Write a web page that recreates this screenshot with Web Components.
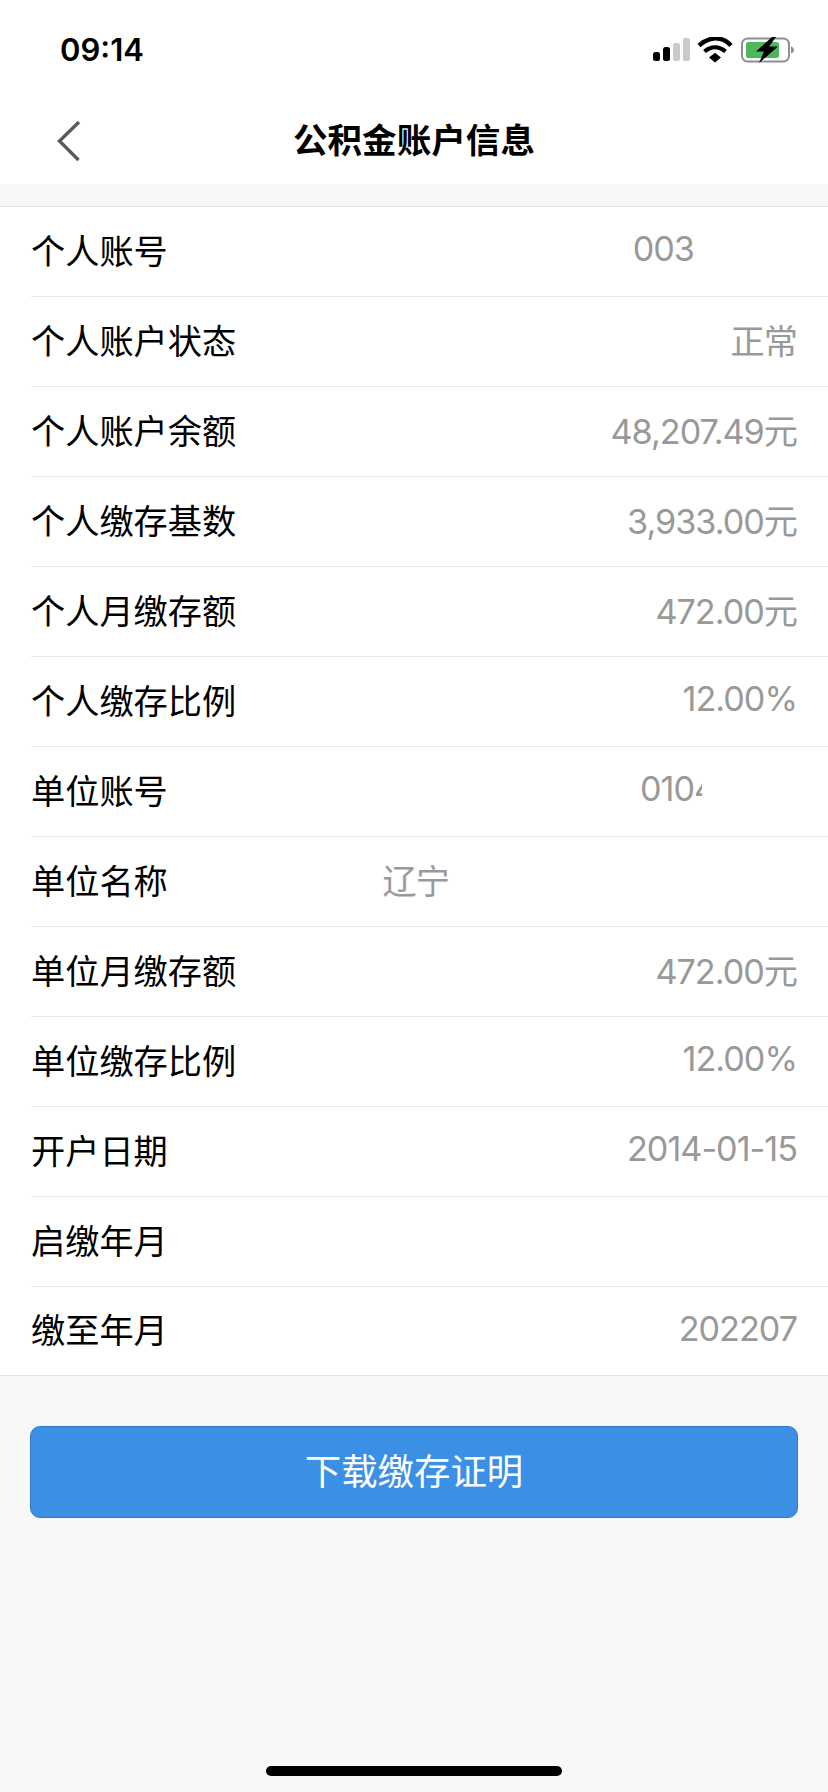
<!DOCTYPE html>
<html lang="zh">
<head>
<meta charset="utf-8">
<title>公积金账户信息</title>
<style>
  html, body { margin: 0; padding: 0; background: #f8f8f8; }
  body { width: 828px; height: 1792px; overflow: hidden; font-family: Inter, "Noto Sans CJK SC", sans-serif; }
</style>
</head>
<body>
<app-page>
  <status-bar time="09:14"></status-bar>
  <nav-bar>公积金账户信息</nav-bar>
  <info-list>
    <info-row label="个人账号" value="003" inset="103"></info-row>
    <info-row label="个人账户状态" value="正常"></info-row>
    <info-row label="个人账户余额" value="48,207.49元"></info-row>
    <info-row label="个人缴存基数" value="3,933.00元"></info-row>
    <info-row label="个人月缴存额" value="472.00元"></info-row>
    <info-row label="个人缴存比例" value="12.00%"></info-row>
    <info-row label="单位账号" value="0104" inset="95" clip="62"></info-row>
    <info-row label="单位名称" value="辽宁" inset="348"></info-row>
    <info-row label="单位月缴存额" value="472.00元"></info-row>
    <info-row label="单位缴存比例" value="12.00%"></info-row>
    <info-row label="开户日期" value="2014-01-15"></info-row>
    <info-row label="启缴年月" value=""></info-row>
    <info-row label="缴至年月" value="202207" last></info-row>
  </info-list>
  <action-button>下载缴存证明</action-button>
  <home-indicator></home-indicator>
</app-page>

<script>
const CJK = '"Noto Sans CJK SC", sans-serif';

class AppPage extends HTMLElement {
  connectedCallback() {
    this.attachShadow({ mode: 'open' });
    this.shadowRoot.innerHTML = `
      <style>
        :host { display: flex; flex-direction: column; position: relative; width: 828px; height: 1792px; background: #f8f8f8; }
      </style>
      <slot></slot>
    `;
  }
}

class StatusBar extends HTMLElement {
  connectedCallback() {
    this.attachShadow({ mode: 'open' });
    this.shadowRoot.innerHTML = `
      <style>
        :host { display: flex; justify-content: space-between; align-items: center; height: 88px; padding: 10px 32px 0 60px; background: #fff; box-sizing: border-box; }
        .time { font: 600 31px Inter, sans-serif; color: #000; }
        .icons { display: flex; align-items: center; padding-top: 6px; }
        svg { display: block; }
      </style>
      <span class="time">${this.getAttribute('time')}</span>
      <div class="icons">
        <svg width="144" height="30" viewBox="0 0 144 30">
          <!-- signal -->
          <rect x="1" y="15" width="7" height="9" rx="2.5" fill="#000"/>
          <rect x="11" y="10" width="7" height="14" rx="2.5" fill="#000"/>
          <rect x="21" y="6" width="7" height="18" rx="2" fill="#c9c9c9"/>
          <rect x="31" y="1" width="7" height="23" rx="2" fill="#c9c9c9"/>
          <!-- wifi -->
          <path d="M47 8.5C58 -1 70 -1 79 8.5" fill="none" stroke="#000" stroke-width="4.4"/>
          <path d="M52.5 14.5C59 9 67 9 73.5 14.5" fill="none" stroke="#000" stroke-width="4.2"/>
          <path d="M57 20.5L63 15.8L69 20.5L63 25.5Z" fill="#000"/>
          <!-- battery -->
          <rect x="90" y="1.5" width="47" height="23" rx="5.5" fill="#fff" stroke="#8e8e8e" stroke-width="2"/>
          <rect x="94" y="5" width="33" height="16" rx="2.5" fill="#4cb85c"/>
          <path d="M139 9.5c2 .5 3 2 3 3.5s-1 3-3 3.5z" fill="#8e8e8e"/>
          <path d="M120 0L104 14.5H112L107 26L126 9.5H117L124 0Z" fill="#000"/>
        </svg>
      </div>
    `;
  }
}

class NavBar extends HTMLElement {
  connectedCallback() {
    this.attachShadow({ mode: 'open' });
    this.shadowRoot.innerHTML = `
      <style>
        :host { display: flex; position: relative; justify-content: center; align-items: center; height: 96px; padding-top: 4px; box-sizing: border-box; background: #fff; }
        .title { font: 700 34.6px ${CJK}; color: #000; line-height: 40px; }
        svg { position: absolute; left: 56px; top: 32px; }
      </style>
      <svg width="26" height="42" viewBox="0 0 26 42">
        <path d="M23 2L3.5 21L22.5 40" fill="none" stroke="#5a5a5a" stroke-width="3.4"/>
      </svg>
      <span class="title"><slot></slot></span>
    `;
  }
}

class InfoList extends HTMLElement {
  connectedCallback() {
    this.attachShadow({ mode: 'open' });
    this.shadowRoot.innerHTML = `
      <style>
        :host { display: block; margin-top: 22px; background: #fff; border-top: 1px solid #e3e3e3; border-bottom: 1px solid #e3e3e3; }
      </style>
      <slot></slot>
    `;
  }
}

class InfoRow extends HTMLElement {
  connectedCallback() {
    this.attachShadow({ mode: 'open' });
    const inset = this.getAttribute('inset') || 0;
    const clip = this.getAttribute('clip');
    this.shadowRoot.innerHTML = `
      <style>
        :host { display: block; padding-left: 31px; }
        .row { display: flex; justify-content: space-between; align-items: center; height: 83px; padding: 0 31px 6px 0; font-size: 34.2px; border-bottom: 1px solid #e6e6e6; }
        :host([last]) .row { height: 82px; border-bottom: 0; }
        .label { font-family: ${CJK}; color: #000; }
        .value { font-family: Inter, ${CJK}; color: #999; letter-spacing: -1px; margin-right: ${inset}px; white-space: nowrap; overflow: hidden; ${clip ? `width: ${clip}px;` : ''} }
      </style>
      <div class="row">
        <span class="label">${this.getAttribute('label')}</span>
        <span class="value">${this.getAttribute('value')}</span>
      </div>
    `;
  }
}

class ActionButton extends HTMLElement {
  connectedCallback() {
    this.attachShadow({ mode: 'open' });
    this.shadowRoot.innerHTML = `
      <style>
        :host { display: flex; justify-content: center; align-items: center; height: 92px; margin: 50px 30px 0; padding-bottom: 6px; box-sizing: border-box; background: #3b90e6; border: 1px solid #2f7cc8; border-radius: 10px; color: #fff; font: 400 36.4px ${CJK}; }
      </style>
      <slot></slot>
    `;
  }
}

class HomeIndicator extends HTMLElement {
  connectedCallback() {
    this.attachShadow({ mode: 'open' });
    this.shadowRoot.innerHTML = `
      <style>
        :host { display: block; position: absolute; left: 266px; bottom: 16px; width: 296px; height: 10px; border-radius: 5px; background: #000; }
      </style>
    `;
  }
}

customElements.define('app-page', AppPage);
customElements.define('status-bar', StatusBar);
customElements.define('nav-bar', NavBar);
customElements.define('info-list', InfoList);
customElements.define('info-row', InfoRow);
customElements.define('action-button', ActionButton);
customElements.define('home-indicator', HomeIndicator);
</script>
</body>
</html>
